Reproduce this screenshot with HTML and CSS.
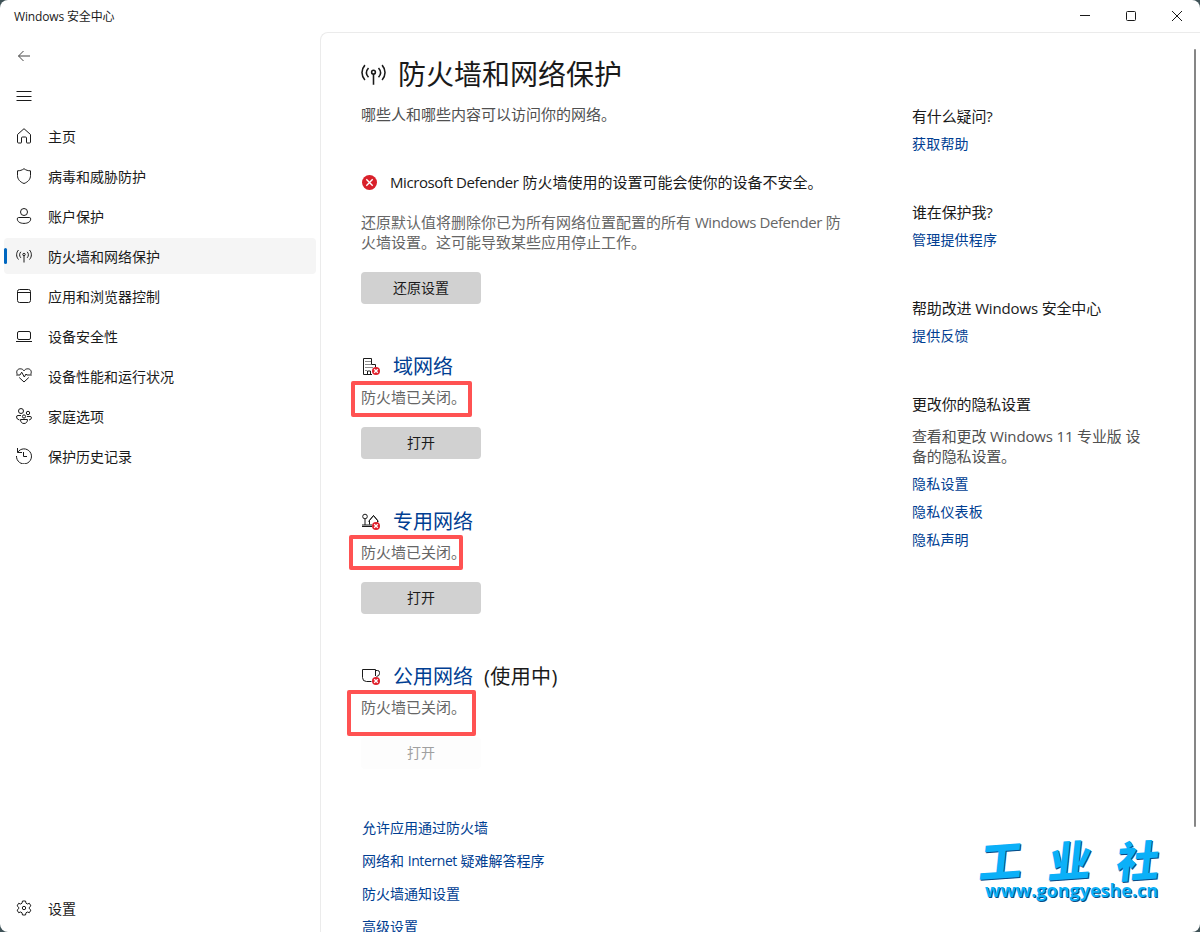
FILE: index.html
```html
<!DOCTYPE html>
<html lang="zh-CN">
<head>
    <meta charset="UTF-8">
    <meta name="viewport" content="width=device-width, initial-scale=1.0">
    <title>Windows 安全中心</title>
    <link rel="stylesheet" href="styles.css">
</head>
<body>
    <!-- Shared icons -->
    <svg class="defs" width="0" height="0">
        <symbol id="antenna" viewBox="0 0 16 16">
            <path d="M2.500 2C0 4.800 0 8.700 2.500 11.500M13.500 2c2.500 2.800 2.500 6.700 0 9.500M4.800 3.800c-1.600 1.800-1.600 4.200 0 6M11.200 3.800c1.600 1.800 1.600 4.200 0 6M8 7.700V14.500"/>
            <circle cx="8" cy="6.500" r="1.200"/>
        </symbol>
        <symbol id="error" viewBox="0 0 16 16">
            <circle cx="8" cy="8" r="8" fill="#d9202a" stroke="none"/>
            <path d="M4.600 4.600l6.800 6.800M11.400 4.600l-6.800 6.800" stroke="#fff" stroke-width="1.500"/>
        </symbol>
        <symbol id="error-small" viewBox="0 0 8 8">
            <circle cx="4" cy="4" r="4" fill="#e0202c" stroke="none"/>
            <path d="M2.200 2.200l3.600 3.600M5.800 2.200L2.200 5.800" stroke="#fff" stroke-width="1.300"/>
        </symbol>
    </svg>

    <div class="window">
        <header class="titlebar">
            <span class="app-name">Windows 安全中心</span>
            <div class="controls">
                <svg width="12" height="12" viewBox="0 0 12 12"><path d="M1 5.500h10"/></svg>
                <svg width="12" height="12" viewBox="0 0 12 12"><rect x="1.500" y="1.500" width="9" height="9" rx="1"/></svg>
                <svg width="12" height="12" viewBox="0 0 12 12"><path d="M1 1l10 10M11 1L1 11"/></svg>
            </div>
        </header>

        <div class="content">
            <!-- Sidebar -->
            <nav class="sidebar">
                <a class="nav-item back"><svg viewBox="0 0 16 16"><path d="M14 8H2.500M7.500 3L2.500 8l5 5"/></svg></a>
                <a class="nav-item"><svg viewBox="0 0 16 16"><path d="M.5 3.500h15M.5 8.500h15M.5 12.500h15"/></svg></a>
                <a class="nav-item"><svg viewBox="0 0 16 16"><path d="M1.500 6.500L8 .7l6.500 5.800V14q0 1-1 1H11q-.5 0-.5-.5V10q0-1-1-1h-3q-1 0-1 1v4.500q0 .5-.5.5H2.500q-1 0-1-1z"/></svg><span>主页</span></a>
                <a class="nav-item"><svg viewBox="0 0 16 16"><path d="M8 .7C10 2.200 12 2.800 14.500 2.800V7.500c0 3.800-2.500 6.500-6.500 8-4-1.500-6.500-4.200-6.500-8V2.800C4 2.800 6 2.200 8 .7z"/></svg><span>病毒和威胁防护</span></a>
                <a class="nav-item"><svg viewBox="0 0 16 16"><circle cx="8" cy="4" r="3.500"/><path d="M2.700 9.500h10.600q1.400 0 1.400 1.400c0 2.800-2.700 4.500-6.700 4.500s-6.700-1.700-6.700-4.500q0-1.400 1.400-1.400z"/></svg><span>账户保护</span></a>
                <a class="nav-item active"><svg><use href="#antenna"/></svg><span>防火墙和网络保护</span></a>
                <a class="nav-item"><svg viewBox="0 0 16 16"><rect x="1.500" y="1.500" width="13" height="13" rx="2"/><path d="M1.500 4.500h13"/></svg><span>应用和浏览器控制</span></a>
                <a class="nav-item"><svg viewBox="0 0 16 16"><rect x="1.500" y="3.500" width="13" height="8" rx="1.500"/><path d="M0 13.500h16"/></svg><span>设备安全性</span></a>
                <a class="nav-item"><svg viewBox="0 0 16 16"><path d="M1.300 6.300C-.2 3.300 1.500.8 4.200.8 6 .8 7.200 1.600 8 2.800c.8-1.200 2-2 3.800-2 2.700 0 4.400 2.500 2.900 5.500M.2 7H4l1.700-2.800 2.600 4.800 1.700-3 .8 1h5M3.200 9.500L8 14l4.800-4.500"/></svg><span>设备性能和运行状况</span></a>
                <a class="nav-item"><svg viewBox="0 0 16 16"><circle cx="5" cy="3" r="2.500"/><circle cx="12" cy="5" r="1.700"/><circle cx="8" cy="8.500" r="1.600"/><path d="M5 7.500H2Q.5 7.500.5 9q.2 2.500 3 3M11 8.500h3q1.500 0 1.500 1.300-.3 2-2.500 2.200M4.500 11.500h7c0 2.500-1.300 4-3.500 4s-3.500-1.500-3.500-4z"/></svg><span>家庭选项</span></a>
                <a class="nav-item"><svg viewBox="0 0 16 16"><path d="M1.500 0v4.500H6M1.700 4.300A7.500 7.500 0 1 1 .5 8M7.500 4v4.500H11"/></svg><span>保护历史记录</span></a>
                <a class="nav-item settings"><svg viewBox="0 0 16 16"><path d="M6.500 1h3l.5 2.200 1.300.8 2.100-.7 1.500 2.600L13.300 7.300v1.400l1.600 1.400-1.500 2.600-2.100-.7-1.300.8L9.500 15h-3L6 12.800 4.700 12l-2.100.7-1.500-2.600 1.600-1.400V7.300L1.100 5.900l1.500-2.600 2.100.7L6 3.200z"/><circle cx="8" cy="8" r="1.700"/></svg><span>设置</span></a>
            </nav>

            <main class="page">
                <section class="main">
                    <h1><svg><use href="#antenna"/></svg>防火墙和网络保护</h1>
                    <p class="desc">哪些人和哪些内容可以访问你的网络。</p>

                    <div class="alert"><svg><use href="#error"/></svg><span><span class="latin">Microsoft Defender</span> 防火墙使用的设置可能会使你的设备不安全。</span></div>
                    <p class="alert-info">还原默认值将删除你已为所有网络位置配置的所有 <span class="latin">Windows Defender</span> 防火墙设置。这可能导致某些应用停止工作。</p>
                    <button>还原设置</button>

                    <!-- Networks -->
                    <div class="network">
                        <h2>
                            <svg viewBox="0 0 20 20"><path d="M11 17.500H2.500v-16h8v6h4v3M6.500 17v-3h3v3"/><path class="dots" d="M4.500 4.500h5M4.500 7.500h5M4.500 10.500h8M4.500 13.500h1"/><use href="#error-small" x="11" y="10" width="8" height="8"/></svg>
                            <a>域网络</a>
                        </h2>
                        <p class="status domain">防火墙已关闭。</p>
                        <button>打开</button>
                    </div>
                    <div class="network">
                        <h2>
                            <svg viewBox="0 0 20 20"><circle cx="4" cy="4.500" r="2.300"/><path d="M4 7v6M1 13h10M1 14.500h10M8.500 12.500V8.500L12.500 3.500l4 5v2M7.500 9.500l5-6 5 6"/><use href="#error-small" x="11" y="10" width="8" height="8"/></svg>
                            <a>专用网络</a>
                        </h2>
                        <p class="status private">防火墙已关闭。</p>
                        <button>打开</button>
                    </div>
                    <div class="network">
                        <h2>
                            <svg viewBox="0 0 20 20"><path d="M14.500 9V2.500h-13v8q0 4 4 4h5M14.500 3.500h2q2 0 2 2v1q0 2.500-3 3"/><use href="#error-small" x="11" y="10" width="8" height="8"/></svg>
                            <a>公用网络</a><span class="in-use">(使用中)</span>
                        </h2>
                        <p class="status public">防火墙已关闭。</p>
                        <button disabled>打开</button>
                    </div>

                    <div class="links">
                        <a>允许应用通过防火墙</a>
                        <a>网络和 <span class="latin">Internet</span> 疑难解答程序</a>
                        <a>防火墙通知设置</a>
                        <a>高级设置</a>
                    </div>
                </section>

                <aside class="help">
                    <div class="help-group">
                        <h3>有什么疑问?</h3>
                        <a>获取帮助</a>
                    </div>
                    <div class="help-group">
                        <h3>谁在保护我?</h3>
                        <a>管理提供程序</a>
                    </div>
                    <div class="help-group">
                        <h3>帮助改进 Windows 安全中心</h3>
                        <a>提供反馈</a>
                    </div>
                    <div class="help-group">
                        <h3>更改你的隐私设置</h3>
                        <p>查看和更改 Windows 11 专业版 设备的隐私设置。</p>
                        <a>隐私设置</a>
                        <a>隐私仪表板</a>
                        <a>隐私声明</a>
                    </div>
                </aside>
                <div class="scrollbar"></div>
            </main>
        </div>

        <div class="watermark">
            <div class="mark-name"><span>工</span><span>业</span><span>社</span></div>
            <div class="mark-url">www.gongyeshe.cn</div>
        </div>
    </div>
</body>
</html>
```
FILE: styles.css
```css
*,
*::before,
*::after {
    margin: 0;
    padding: 0;
    box-sizing: border-box;
}

body {
    font-family: "Open Sans", "Noto Sans CJK SC", sans-serif;
    font-size: 14px;
    color: #1a1a1a;
    background-color: #3f5257;
    height: 932px;
    overflow: hidden;
}

svg {
    flex: none;
    fill: none;
    stroke: #1a1a1a;
    stroke-width: 1;
}

.defs {
    position: absolute;
}

.window {
    position: relative;
    display: flex;
    flex-direction: column;
    height: 932px;
    background-color: #fff;
    border-radius: 8px;
    overflow: hidden;
}

/* Title bar */
.titlebar {
    display: flex;
    justify-content: space-between;
    align-items: center;
    flex: none;
    height: 32px;
    padding: 0 17px 0 14px;
}

.app-name {
    font-size: 12px;
    letter-spacing: -0.15px;
}

.controls {
    display: flex;
    gap: 34px;
}

.content {
    display: flex;
    flex: 1;
    min-height: 0;
}

/* Sidebar */
.sidebar {
    display: flex;
    flex-direction: column;
    gap: 4px;
    width: 320px;
    padding: 6px 4px;
}

.nav-item {
    display: flex;
    align-items: center;
    gap: 16px;
    height: 36px;
    padding-left: 12px;
    border-radius: 4px;
    line-height: 20px;
}

.nav-item span {
    padding-top: 2px;
}

.nav-item svg {
    width: 16px;
    height: 16px;
}

.nav-item.back svg {
    stroke: #444;
}

.nav-item.active {
    position: relative;
    background-color: #f5f5f5;
}

.nav-item.active::before {
    content: "";
    position: absolute;
    left: 0;
    top: 10px;
    width: 3px;
    height: 16px;
    border-radius: 2px;
    background-color: #0067c0;
}

.nav-item.settings {
    margin-top: auto;
}

/* Page */
.page {
    position: relative;
    display: flex;
    flex: 1;
    border-top: 1px solid #ebebeb;
    border-left: 1px solid #ebebeb;
    border-top-left-radius: 8px;
    padding-left: 40px;
    overflow: hidden;
}

.main {
    width: 485px;
    margin-right: 66px;
}

h1 {
    display: flex;
    align-items: center;
    gap: 12px;
    margin-top: 21px;
    height: 40px;
    font-size: 28px;
    font-weight: 400;
    line-height: 40px;
}

h1 svg {
    width: 25px;
    height: 25px;
}

.desc {
    margin-top: 10px;
    font-size: 15px;
    line-height: 20px;
    color: #505050;
}

.alert {
    display: flex;
    align-items: center;
    gap: 13px;
    margin: 48px 0 20px;
    padding-left: 1px;
    height: 20px;
    font-size: 15px;
    line-height: 20px;
    white-space: nowrap;
}

.alert svg {
    width: 15px;
    height: 15px;
}

.alert-info {
    margin-bottom: 20px;
    font-size: 15px;
    line-height: 20px;
    color: #666;
}

.latin {
    letter-spacing: -0.4px;
}

button {
    display: block;
    width: 120px;
    height: 32px;
    padding-bottom: 2px;
    border: none;
    border-radius: 4px;
    background-color: #d1d1d1;
    color: #1a1a1a;
    font-family: inherit;
    font-size: 14px;
}

button:disabled {
    background-color: #fdfdfd;
    color: #a0a0a0;
}

.network {
    height: 155px;
    padding-top: 49px;
}

h2 {
    display: flex;
    align-items: center;
    height: 28px;
    font-size: 20px;
    font-weight: 400;
    line-height: 28px;
}

h2 svg {
    width: 20px;
    height: 20px;
    margin-right: 12px;
}

.in-use {
    margin-left: 11px;
    letter-spacing: 0.4px;
}

.dots {
    stroke-dasharray: 1 1;
}

.status {
    position: relative;
    margin: 6px 0 20px;
    font-size: 15px;
    line-height: 20px;
    color: #666;
}

/* Red highlight frames */
.status::after {
    content: "";
    position: absolute;
    border: 4px solid #ff5252;
    border-radius: 2px;
}

.status.domain::after {
    left: -10px;
    top: -6px;
    width: 121px;
    height: 36px;
}

.status.private::after {
    left: -12px;
    top: -7px;
    width: 114px;
    height: 35px;
}

.status.public::after {
    left: -14px;
    top: -7px;
    width: 129px;
    height: 46px;
}

a {
    color: #003e92;
}

.nav-item {
    color: #1a1a1a;
}

.links {
    display: flex;
    flex-direction: column;
    gap: 13px;
    margin-top: 49px;
    padding-left: 1px;
}

.links a,
.help a {
    display: block;
    line-height: 20px;
}

/* Help column */
.help {
    width: 240px;
    padding-top: 73px;
}

.help-group {
    margin-bottom: 48px;
}

.help-group h3 {
    font-size: 15px;
    font-weight: 400;
    line-height: 20px;
    letter-spacing: -0.15px;
    white-space: nowrap;
}

.help-group p {
    margin-top: 12px;
    font-size: 15px;
    line-height: 20px;
    letter-spacing: -0.15px;
    color: #505050;
}

.help-group a {
    margin-top: 8px;
    letter-spacing: 0.2px;
}

.scrollbar {
    position: absolute;
    right: 4px;
    top: 16px;
    width: 2px;
    height: 778px;
    border-radius: 1px;
    background-color: #868686;
}

/* Watermark */
.watermark {
    position: absolute;
    left: 980px;
    top: 836px;
    width: 180px;
    color: #0bb0f8;
    text-shadow: 1px 1px 0 #0a4c86;
}

.mark-name {
    display: flex;
    justify-content: space-between;
    font-family: "Noto Sans CJK SC", sans-serif;
    font-size: 43px;
    font-weight: 900;
    line-height: 44px;
}

.mark-name span {
    transform: skew(-6deg, -4deg);
}

.mark-url {
    padding-left: 5px;
    font-size: 18px;
    font-weight: 700;
    line-height: 20px;
}
```
